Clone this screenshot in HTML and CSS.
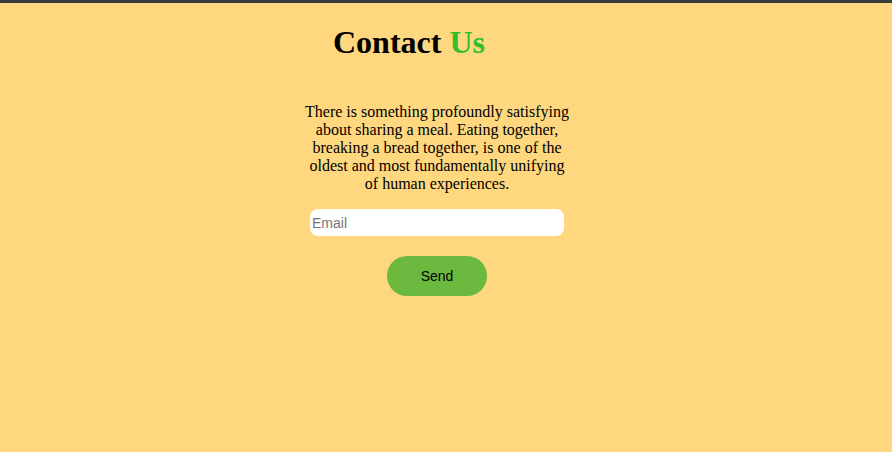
FILE: index.html
```html
<!DOCTYPE html>
<html>
<head>
<meta charset="utf-8">
<link rel="stylesheet" href="styles.css">
</head>
<body>
<div class="page">
  <h1 class="title">Contact <span class="accent">Us</span></h1>
  <div class="contact">
    <p class="intro">There is something profoundly satisfying about sharing a meal. Eating together, breaking a bread together, is one of the oldest and most fundamentally unifying of human experiences.</p>
    <input class="email" type="email" placeholder="Email">
    <button class="send" type="button">Send</button>
  </div>
</div>
</body>
</html>
```

FILE: styles.css
```css
html, body {
  margin: 0;
  height: 100%;
}
body {
  background: #ffd77e;
  border-top: 3px solid #3b3d3d;
  box-sizing: border-box;
  font-family: "Liberation Serif", "Times New Roman", serif;
  color: #000;
}
.page {
  display: flex;
  flex-direction: column;
  align-items: center;
  padding-right: 18px;
}
.title {
  font-size: 32px;
  font-weight: bold;
  margin: 21px 56px 0 0;
  line-height: 37px;
}
.accent {
  color: #2fbf2a;
}
.contact {
  display: flex;
  flex-direction: column;
  align-items: center;
  width: 270px;
  margin-top: 42px;
}
.intro {
  margin: 0;
  font-size: 16px;
  line-height: 18px;
  text-align: center;
}
.email {
  margin-top: 16px;
  width: 254px;
  height: 27px;
  box-sizing: border-box;
  border: none;
  border-radius: 8px;
  background: #fff;
  padding: 0 2px;
  font-family: "Liberation Sans", Arial, sans-serif;
  font-size: 14px;
  outline: none;
}
.email::placeholder {
  color: #777;
}
.send {
  margin-top: 20px;
  width: 100px;
  height: 40px;
  border: none;
  border-radius: 20px;
  background: #6cb93f;
  color: #000;
  font-family: "Liberation Sans", Arial, sans-serif;
  font-size: 14px;
}
```
